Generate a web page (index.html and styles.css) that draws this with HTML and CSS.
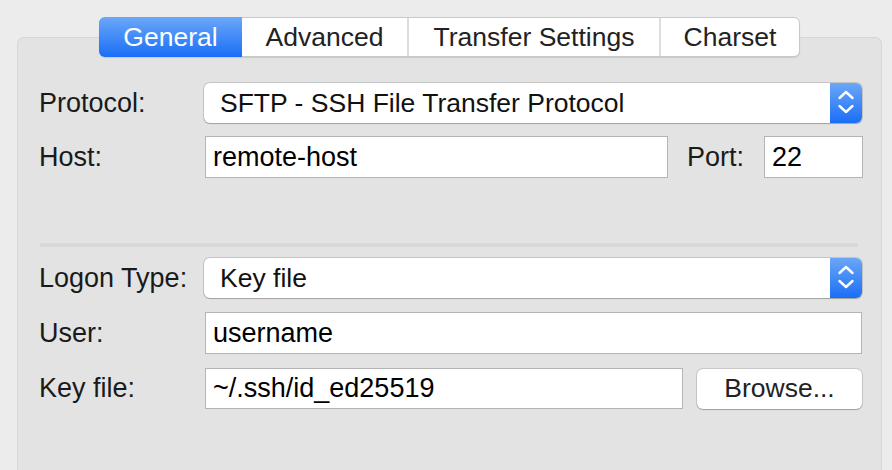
FILE: index.html
```html
<!DOCTYPE html>
<html>
<head>
<meta charset="utf-8">
<link rel="stylesheet" href="styles.css">
</head>
<body>
<div class="window">
  <div class="tabs">
    <div class="tab tab-active">General</div>
    <div class="tab tab-adv">Advanced</div>
    <div class="tab tab-transfer">Transfer Settings</div>
    <div class="tab tab-charset">Charset</div>
  </div>
  <div class="panel">
    <div class="row row-select">
      <div class="label">Protocol:</div>
      <div class="select">
        <span class="select-text">SFTP - SSH File Transfer Protocol</span>
        <span class="stepper">
          <svg width="32" height="40" viewBox="0 0 32 40"><path d="M9.5 15 L16 9 L22.5 15" fill="none" stroke="#fff" stroke-width="2.4" stroke-linecap="round" stroke-linejoin="round"/><path d="M9.5 23 L16 29 L22.5 23" fill="none" stroke="#fff" stroke-width="2.4" stroke-linecap="round" stroke-linejoin="round"/></svg>
        </span>
      </div>
    </div>
    <div class="row row-host">
      <div class="label">Host:</div>
      <div class="field-group">
        <div class="input input-host">remote-host</div>
        <div class="label port-label">Port:</div>
        <div class="input input-port">22</div>
      </div>
    </div>
    <div class="separator"></div>
    <div class="row row-select row-logon">
      <div class="label">Logon Type:</div>
      <div class="select">
        <span class="select-text">Key file</span>
        <span class="stepper">
          <svg width="32" height="40" viewBox="0 0 32 40"><path d="M9.5 15 L16 9 L22.5 15" fill="none" stroke="#fff" stroke-width="2.4" stroke-linecap="round" stroke-linejoin="round"/><path d="M9.5 23 L16 29 L22.5 23" fill="none" stroke="#fff" stroke-width="2.4" stroke-linecap="round" stroke-linejoin="round"/></svg>
        </span>
      </div>
    </div>
    <div class="row row-user">
      <div class="label">User:</div>
      <div class="input">username</div>
    </div>
    <div class="row row-key">
      <div class="label">Key file:</div>
      <div class="field-group">
        <div class="input input-key">~/.ssh/id_ed25519</div>
        <div class="button">Browse...</div>
      </div>
    </div>
  </div>
</div>
</body>
</html>
```
FILE: styles.css
```css
html, body {
  margin: 0;
  padding: 0;
  background: #ececec;
  font-family: "Liberation Sans", Arial, sans-serif;
  color: #1d1d1d;
  overflow: hidden;
}
.window {
  width: 892px;
  height: 470px;
  padding-top: 17px;
  box-sizing: border-box;
  overflow: hidden;
}
.tabs {
  position: relative;
  z-index: 1;
  display: flex;
  width: 701px;
  height: 40px;
  margin-left: 99px;
  box-sizing: border-box;
  background: #fff;
  border: 1px solid #c9c9c9;
  border-radius: 6px;
  box-shadow: 0 1px 1px rgba(0,0,0,0.12);
}
.tab {
  display: flex;
  align-items: center;
  justify-content: center;
  font-size: 26.5px;
  color: #222;
  border-left: 2px solid #dddddd;
  box-sizing: border-box;
  height: 38px;
}
.tab-active {
  width: 143px;
  border-left: none;
  margin: -1px 0 -1px -1px;
  height: 40px;
  color: #fff;
  background: linear-gradient(#6ba7f9, #1a6ef6);
  border-radius: 6px 0 0 6px;
}
.tab-adv { width: 165px; border-left: none; }
.tab-transfer { width: 252px; }
.tab-charset { width: 140px; }
.panel {
  margin-top: -20px;
  margin-left: 17px;
  width: 865px;
  height: 433px;
  box-sizing: border-box;
  background: #e3e3e3;
  border: 1px solid #d6d6d6;
  border-bottom: none;
  border-radius: 7px 7px 0 0;
  padding: 45px 19px 0 20px;
}
.row {
  display: grid;
  grid-template-columns: 166px 1fr;
  align-items: center;
}
.label {
  font-size: 27px;
  color: #1a1a1a;
  padding-left: 1px;
}
.row-host { margin-top: 13px; }
.row-logon { margin-top: 11px; }
.row-user { margin-top: 14px; }
.row-key { margin-top: 14px; }
.select {
  display: flex;
  align-items: center;
  height: 40px;
  background: #fff;
  border-radius: 6px;
  box-shadow: 0 0 0 1px rgba(0,0,0,0.13), 0 1px 1px rgba(0,0,0,0.18);
  overflow: hidden;
}
.select-text {
  flex: 1;
  font-size: 26.5px;
  color: #111;
  padding-left: 16px;
}
.stepper {
  width: 32px;
  height: 40px;
  background: linear-gradient(#6ba7f9, #1a6ef6);
  display: flex;
}
.field-group {
  display: flex;
  align-items: center;
}
.input {
  height: 42px;
  box-sizing: border-box;
  background: #fff;
  border: 1px solid #b4b4b4;
  font-size: 27px;
  color: #000;
  padding-left: 7px;
  display: flex;
  align-items: center;
  margin-left: 1px;
}
.input-host { width: 463px; }
.port-label { margin-left: 18px; width: 76px; }
.input-port { width: 99px; }
.input-key { width: 478px; height: 41px; }
.button {
  margin-left: 14px;
  width: 165px;
  height: 40px;
  box-sizing: border-box;
  background: #fff;
  border-radius: 6px;
  box-shadow: 0 0 0 1px rgba(0,0,0,0.12), 0 1px 1px rgba(0,0,0,0.2);
  font-size: 26.5px;
  color: #222;
  display: flex;
  align-items: center;
  justify-content: center;
}
.separator {
  height: 4px;
  background: #d8d8d8;
  margin: 65px 4px 0 2px;
}
```
